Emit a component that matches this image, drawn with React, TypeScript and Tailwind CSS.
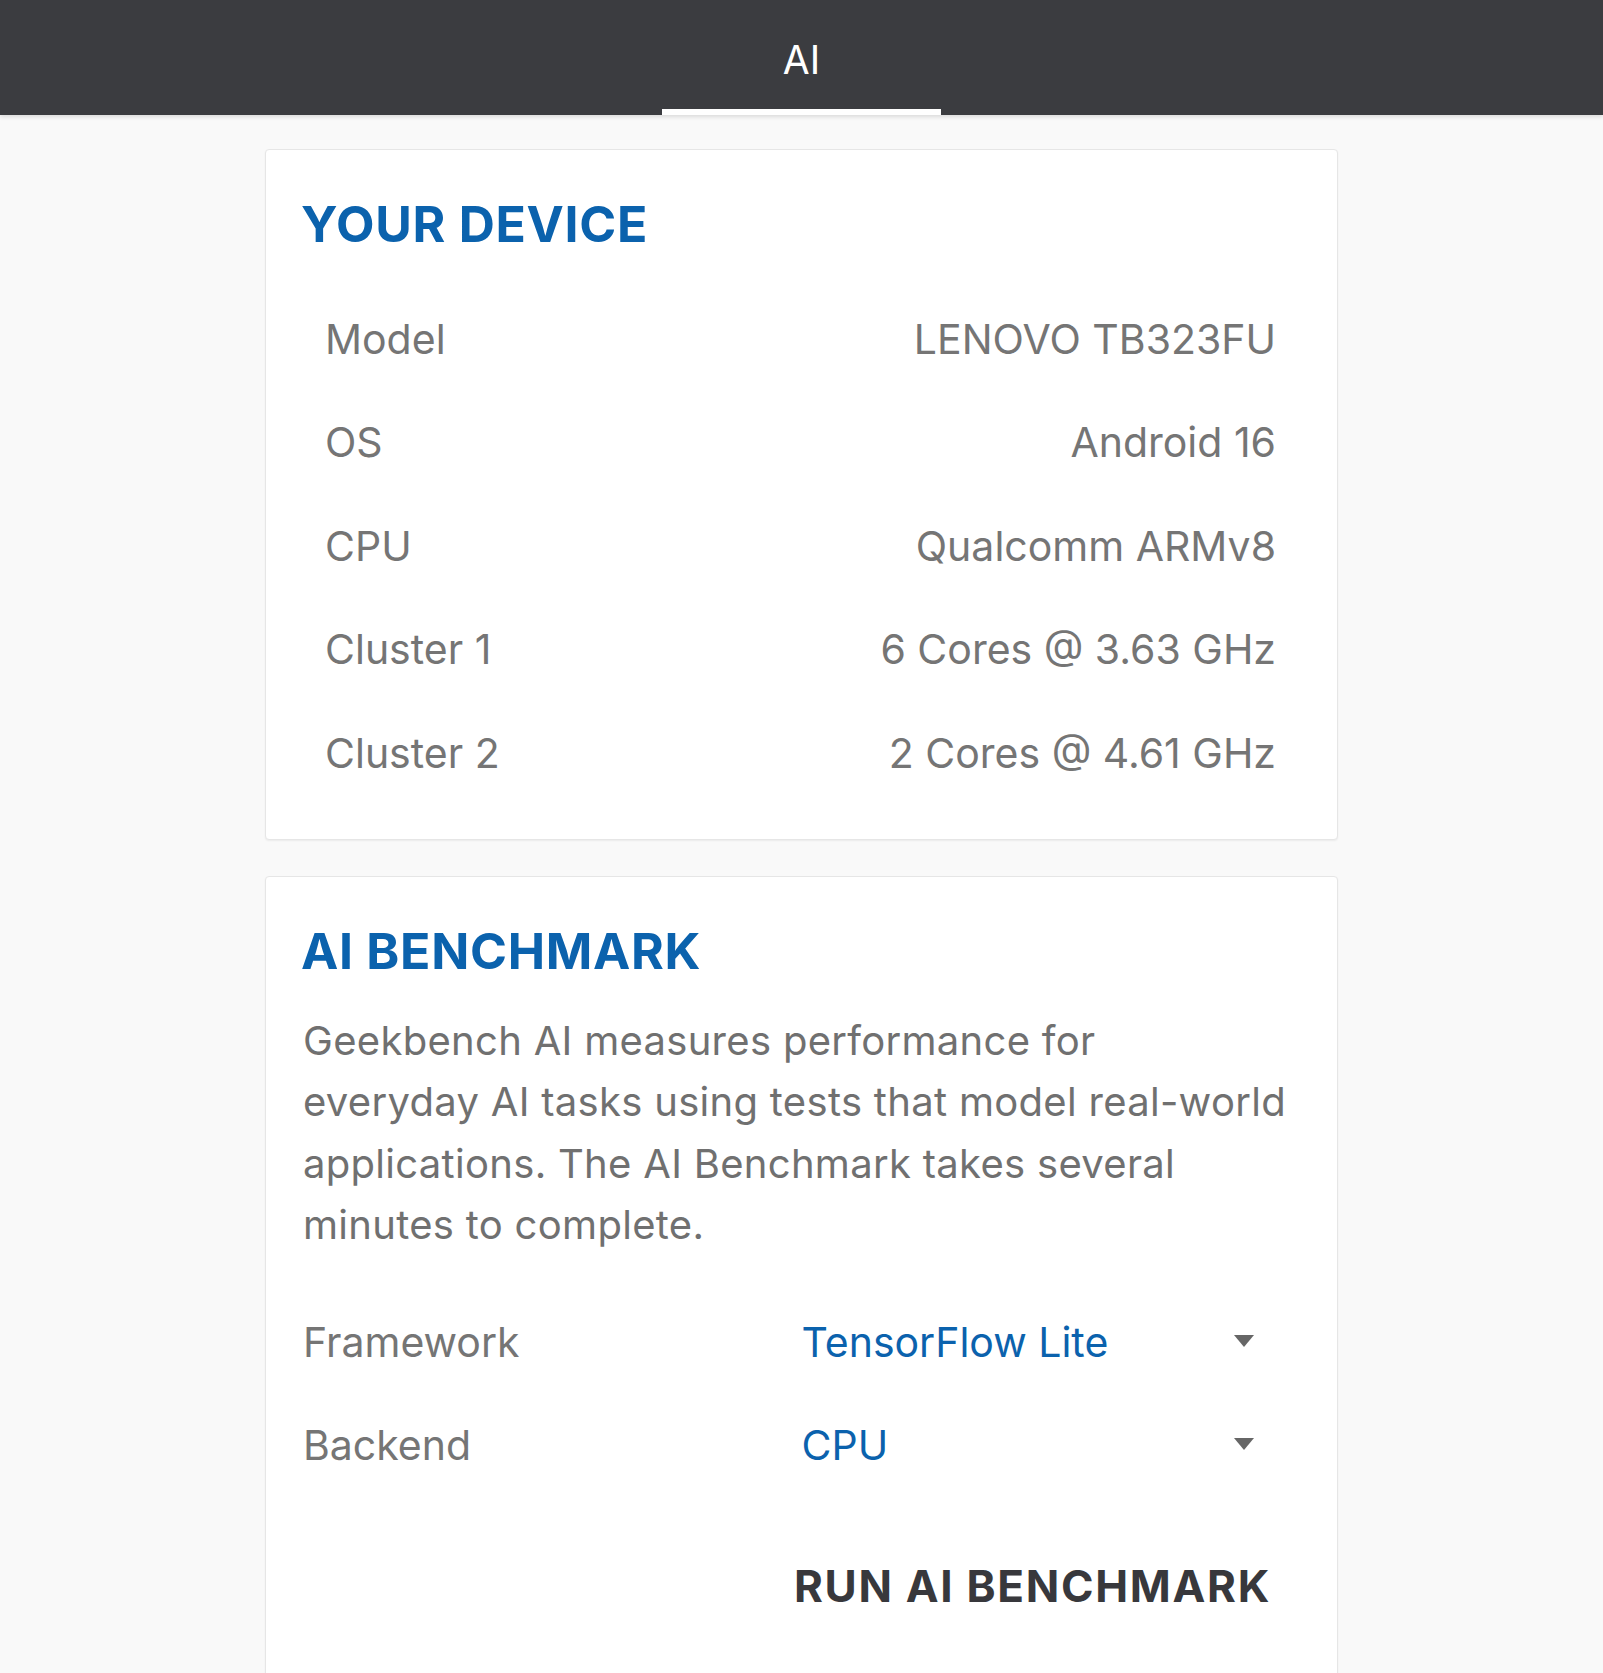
import { ReactNode } from "react";

const font = { fontFamily: "Inter, 'Open Sans', sans-serif" };

type Row = { label: string; value: string };

const device: Row[] = [
  { label: "Model", value: "LENOVO TB323FU" },
  { label: "OS", value: "Android 16" },
  { label: "CPU", value: "Qualcomm ARMv8" },
  { label: "Cluster 1", value: "6 Cores @ 3.63 GHz" },
  { label: "Cluster 2", value: "2 Cores @ 4.61 GHz" },
];

function Card({ children, className = "" }: { children: ReactNode; className?: string }) {
  return (
    <section
      className={`mx-auto w-[1073px] rounded-[4px] border border-[#e6e6e6] bg-white shadow-[0_1px_2px_rgba(0,0,0,0.06)] ${className}`}
    >
      {children}
    </section>
  );
}

function Title({ children }: { children: ReactNode }) {
  return (
    <h2 className="pl-[35px] text-[50px] font-bold leading-[60px] tracking-[0.7px] text-[#0b62ad]">
      {children}
    </h2>
  );
}

function Select({ label, value }: { label: string; value: string }) {
  return (
    <div className="grid h-[103px] grid-cols-2 items-center">
      <span className="text-[41px] leading-[50px] text-[#757575]">{label}</span>
      <div className="flex items-center justify-between pr-[46px]">
        <span className="text-[41px] leading-[50px] text-[#0b62ad]">{value}</span>
        <svg width="20" height="12" viewBox="0 0 20 12" className="mt-[-2px]">
          <path d="M0 0 H20 L10 12 Z" fill="#666666" />
        </svg>
      </div>
    </div>
  );
}

export default function App() {
  return (
    <div className="min-h-[1673px] bg-[#f9f9f9]" style={font}>
      <header className="relative flex h-[115px] justify-center bg-[#3b3c40] shadow-[0_2px_4px_rgba(0,0,0,0.12)]">
        <div className="flex w-[279px] flex-col items-center">
          <span className="flex-1 pt-[36px] text-[39px] leading-[48px] text-white">AI</span>
          <div className="h-[6px] w-full bg-white" />
        </div>
      </header>

      <Card className="mt-[34px] pb-[34px] pt-[44px]">
        <Title>YOUR DEVICE</Title>
        <div className="mt-[33px] pl-[59px] pr-[61px]">
          {device.map((r) => (
            <div key={r.label} className="flex h-[103.5px] items-center justify-between">
              <span className="text-[41px] leading-[50px] text-[#757575]">{r.label}</span>
              <span className="text-[41px] leading-[50px] text-[#757575]">{r.value}</span>
            </div>
          ))}
        </div>
      </Card>

      <Card className="mt-[36px] pb-[60px] pt-[44px]">
        <Title>AI BENCHMARK</Title>
        <div className="px-[37px]">
          <p className="mt-[29px] text-[40px] leading-[61.5px] tracking-[0.3px] text-[#707070]">
            <span className="block whitespace-nowrap">Geekbench AI measures performance for</span>
            <span className="block whitespace-nowrap">everyday AI tasks using tests that model real-world</span>
            <span className="block whitespace-nowrap">applications. The AI Benchmark takes several</span>
            <span className="block whitespace-nowrap">minutes to complete.</span>
          </p>
          <div className="mt-[35px]">
            <Select label="Framework" value="TensorFlow Lite" />
            <Select label="Backend" value="CPU" />
          </div>
          <div className="mt-[59px] flex justify-end pr-[29px]">
            <button className="text-[44px] font-bold leading-[60px] tracking-[1.7px] text-[#38383c]">
              RUN AI BENCHMARK
            </button>
          </div>
        </div>
      </Card>
    </div>
  );
}
